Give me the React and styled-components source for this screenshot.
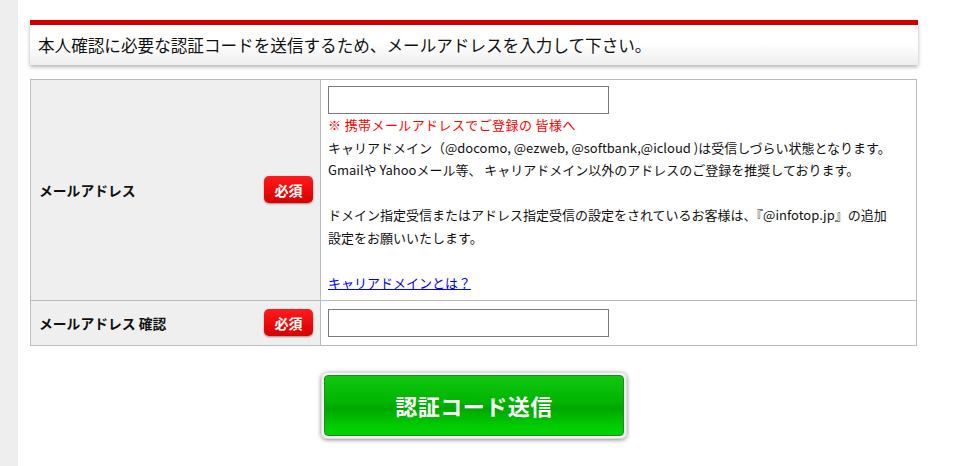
import styled, { createGlobalStyle } from 'styled-components'

const Global = createGlobalStyle`
  html, body {
    margin: 0;
    padding: 0;
    background: #fff;
    font-family: "Noto Sans CJK JP", "Liberation Sans", sans-serif;
    color: #111;
  }
`

const Page = styled.div`
  display: flex;
  min-height: 466px;
`

const Side = styled.div`
  width: 18px;
  flex: none;
  background: #eeeeee;
`

const Main = styled.div`
  width: 888px;
  padding: 20px 0 0 12px;
`

const Heading = styled.div`
  border-top: 5px solid #cc0000;
  height: 40px;
  padding-left: 8px;
  background: linear-gradient(#ffffff 45%, #eeeeee);
  box-shadow: 0 2px 4px rgba(0, 0, 0, 0.3);
  font-size: 16.6px;
  line-height: 40px;
  color: #111;
`

const Table = styled.table`
  margin-top: 14px;
  width: 887px;
  border-collapse: collapse;
  border: 1px solid #bbbbbb;
`

const Head = styled.th`
  width: 274px;
  padding: 0 7px 0 8px;
  background: #efefef;
  border: 1px solid #bbbbbb;
  text-align: left;
  font-weight: normal;
`

const HeadInner = styled.div`
  display: flex;
  align-items: center;
  justify-content: space-between;
  font-size: 13.8px;
  font-weight: bold;
`

const Badge = styled.span`
  display: inline-flex;
  align-items: center;
  justify-content: center;
  width: 49px;
  height: 27px;
  border-radius: 5px;
  background: linear-gradient(#ff1a1a, #d90000);
  box-shadow: 0 1px 2px rgba(0, 0, 0, 0.4);
  color: #fff;
  font-size: 14px;
  font-weight: bold;
`

const Cell = styled.td`
  border: 1px solid #bbbbbb;
  padding: ${p => (p.$tall ? '6px 7px 5px 7px' : '8px 7px 8px 7px')};
  vertical-align: top;
  font-size: 13px;
  line-height: 22.6px;
`

const Input = styled.input`
  display: block;
  box-sizing: border-box;
  width: 281px;
  height: 28px;
  margin: 0;
  border: 1px solid #7a7a7a;
  background: #fff;
`

const Note = styled.div`
  color: #ff0000;
  letter-spacing: 0.4px;
`

const Text = styled.p`
  margin: 0;
`

const Link = styled.a`
  color: #0000ee;
  text-decoration: underline;
`

const Actions = styled.div`
  display: flex;
  justify-content: center;
  margin-top: 26px;
`

const Submit = styled.button`
  width: 306px;
  height: 67px;
  padding: 3px;
  border: none;
  border-radius: 6px;
  background: #f4f4f4;
  box-shadow: 0 1px 4px rgba(0, 0, 0, 0.45), inset 0 0 0 1px #dcdcdc;
  cursor: pointer;
`

const SubmitFace = styled.span`
  display: flex;
  align-items: center;
  justify-content: center;
  height: 100%;
  border-radius: 4px;
  border: 1px solid #1c8a1c;
  box-sizing: border-box;
  background: linear-gradient(#10c810 0%, #00b400 45%, #00a600 55%, #00cc00 85%, #00d400 100%);
  color: #fff;
  font-family: "Noto Sans CJK JP", sans-serif;
  font-size: 22px;
  font-weight: bold;
  letter-spacing: 0.5px;
`

export default function App() {
  return (
    <Page>
      <Global />
      <Side />
      <Main>
        <Heading>本人確認に必要な認証コードを送信するため、メールアドレスを入力して下さい。</Heading>
        <Table>
          <tbody>
            <tr>
              <Head>
                <HeadInner>
                  <span>メールアドレス</span>
                  <Badge>必須</Badge>
                </HeadInner>
              </Head>
              <Cell $tall>
                <Input type="text" />
                <Note>※ 携帯メールアドレスでご登録の 皆様へ</Note>
                <Text>キャリアドメイン（@docomo, @ezweb, @softbank,@icloud )は受信しづらい状態となります。</Text>
                <Text>Gmailや Yahooメール等、 キャリアドメイン以外のアドレスのご登録を推奨しております。</Text>
                <Text>&nbsp;</Text>
                <Text>ドメイン指定受信またはアドレス指定受信の設定をされているお客様は、『@infotop.jp』の追加</Text>
                <Text>設定をお願いいたします。</Text>
                <Text>&nbsp;</Text>
                <Text><Link href="#">キャリアドメインとは？</Link></Text>
              </Cell>
            </tr>
            <tr>
              <Head>
                <HeadInner>
                  <span>メールアドレス 確認</span>
                  <Badge>必須</Badge>
                </HeadInner>
              </Head>
              <Cell>
                <Input type="text" />
              </Cell>
            </tr>
          </tbody>
        </Table>
        <Actions>
          <Submit type="button">
            <SubmitFace>認証コード送信</SubmitFace>
          </Submit>
        </Actions>
      </Main>
    </Page>
  )
}
